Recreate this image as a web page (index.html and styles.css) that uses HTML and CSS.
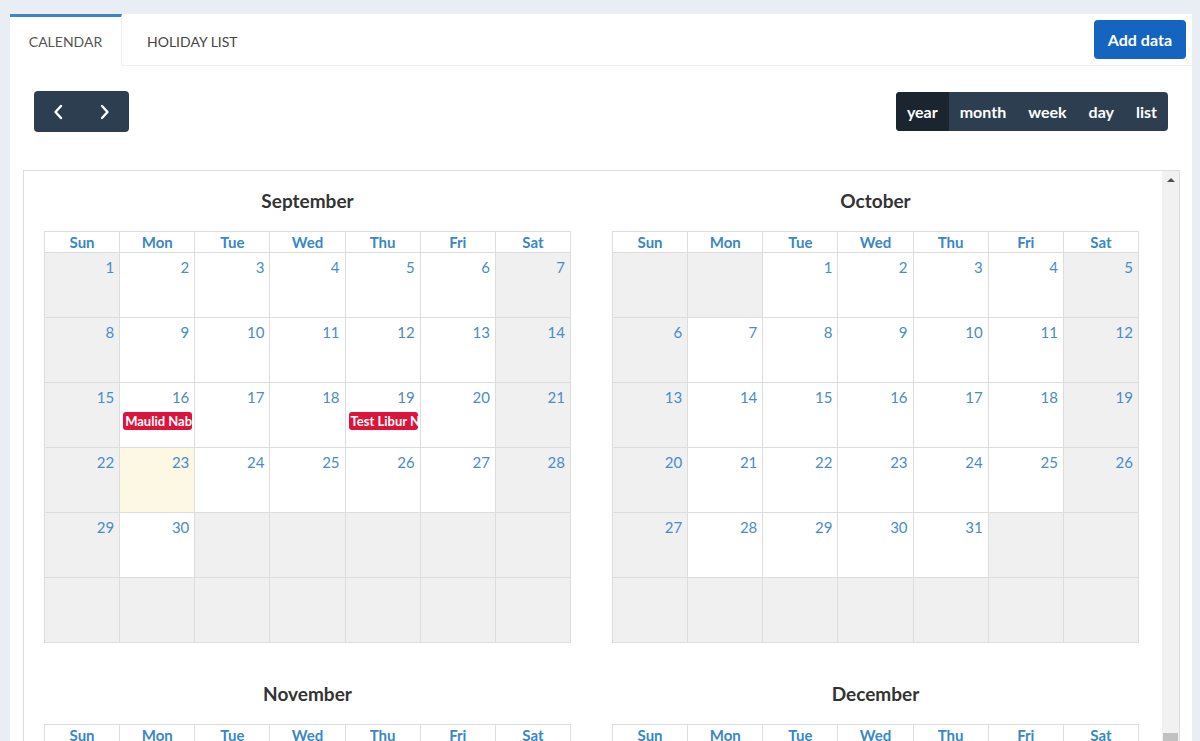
FILE: index.html
```html
<!DOCTYPE html>
<html lang="en">
<head>
  <meta charset="UTF-8">
  <title>Holiday Calendar</title>
  <meta name="viewport" content="width=device-width, initial-scale=1.0">
  <link rel="stylesheet" href="styles.css">
</head>
<body>
  <div class="card">
    <div class="tabbar">
      <div class="tab active">CALENDAR</div>
      <div class="tab">HOLIDAY LIST</div>
      <div class="tab-fill">
        <button class="btn-add">Add data</button>
      </div>
    </div>

    <div class="toolbar">
      <div class="btn-group">
        <button class="btn-nav" aria-label="prev">
          <svg width="10" height="16" viewBox="0 0 10 16"><path d="M8 2 L2.5 8 L8 14" fill="none" stroke="#fff" stroke-width="2.4" stroke-linecap="round" stroke-linejoin="round"/></svg>
        </button>
        <button class="btn-nav" aria-label="next">
          <svg width="10" height="16" viewBox="0 0 10 16"><path d="M2 2 L7.5 8 L2 14" fill="none" stroke="#fff" stroke-width="2.4" stroke-linecap="round" stroke-linejoin="round"/></svg>
        </button>
      </div>
      <div class="btn-group views">
        <button class="btn-view active">year</button>
        <button class="btn-view">month</button>
        <button class="btn-view">week</button>
        <button class="btn-view">day</button>
        <button class="btn-view">list</button>
      </div>
    </div>

    <div class="scroller">
      <div class="months" id="months"></div>
      <div class="scrollbar">
        <div class="arrow-up"></div>
        <div class="thumb"></div>
      </div>
    </div>
  </div>

  <script>
    const monthList = [
      { name: "September", y: 2024, m: 8 },
      { name: "October", y: 2024, m: 9 },
      { name: "November", y: 2024, m: 10 },
      { name: "December", y: 2024, m: 11 }
    ];
    const days = ["Sun", "Mon", "Tue", "Wed", "Thu", "Fri", "Sat"];
    const events = {
      "2024-8-16": "Maulid Nabi Muhammad SAW",
      "2024-8-19": "Test Libur Nasional"
    };
    const today = "2024-8-23";
    const wrap = document.getElementById("months");

    monthList.forEach(mo => {
      const box = document.createElement("div");
      box.className = "month";
      let html = `<div class="month-title">${mo.name}</div><div class="cal">`;
      days.forEach(d => html += `<div class="dow">${d}</div>`);
      const start = new Date(mo.y, mo.m, 1).getDay();
      const count = new Date(mo.y, mo.m + 1, 0).getDate();
      for (let i = 0; i < 42; i++) {
        const day = i - start + 1;
        if (day < 1 || day > count) {
          html += `<div class="day off"></div>`;
          continue;
        }
        const key = `${mo.y}-${mo.m}-${day}`;
        let cls = "day";
        if (i % 7 === 0 || i % 7 === 6) cls += " weekend";
        if (key === today) cls += " today";
        html += `<div class="${cls}"><div class="num">${day}</div>`;
        if (events[key]) html += `<div class="event">${events[key]}</div>`;
        html += `</div>`;
      }
      html += `</div>`;
      box.innerHTML = html;
      wrap.appendChild(box);
    });
  </script>
</body>
</html>
```

FILE: styles.css
```css
html, body {
  height: 741px;
  overflow: hidden;
}

body {
  font-family: Lato, "Liberation Sans", Arial, sans-serif;
  background: #e9eef5;
  margin: 0;
  padding: 14px 8px 0 10px;
  box-sizing: border-box;
}

button {
  font-family: inherit;
  border: none;
  cursor: pointer;
}

.card {
  background: #fff;
  height: 760px;
}

.tabbar {
  display: flex;
  height: 52px;
}

.tab {
  padding: 0 25px;
  font-size: 14px;
  color: #444;
  display: flex;
  align-items: center;
  border-top: 3px solid transparent;
  border-bottom: 1px solid #f0f0f0;
  box-sizing: border-box;
}

.tab.active {
  width: 112px;
  justify-content: center;
  border-top-color: #3c86c4;
  border-right: 1px solid #f0f0f0;
  border-bottom-color: transparent;
  color: #555;
  padding: 0;
}

.tab-fill {
  flex: 1;
  display: flex;
  justify-content: flex-end;
  align-items: flex-start;
  padding: 6px 6px 0 0;
  border-bottom: 1px solid #f0f0f0;
}

.btn-add {
  background: #1565c0;
  color: #fff;
  font-size: 16px;
  font-weight: bold;
  height: 39px;
  padding: 0 14px;
  border-radius: 4px;
}

.toolbar {
  display: flex;
  justify-content: space-between;
  align-items: flex-start;
  padding: 25px 24px 0 24px;
  height: 104px;
  box-sizing: border-box;
}

.btn-group {
  display: flex;
  background: #2c3e50;
  border-radius: 4px;
  overflow: hidden;
}

.btn-nav {
  width: 47.5px;
  height: 41px;
  background: transparent;
  display: flex;
  align-items: center;
  justify-content: center;
}

.views {
  margin-top: 1px;
}

.btn-view {
  height: 39px;
  background: transparent;
  color: #fff;
  font-size: 16px;
  font-weight: bold;
  padding: 0 11px;
}

.btn-view.active {
  background: #1a252f;
}

.scroller {
  margin: 0 12px 0 13px;
  border: 1px solid #ddd;
  display: flex;
  height: 590px;
  overflow: hidden;
}

.months {
  flex: 1;
  display: grid;
  grid-template-columns: 527px 527px;
  column-gap: 41px;
  row-gap: 37px;
  padding: 16px 0 0 20px;
  align-content: start;
}

.month-title {
  text-align: center;
  font-size: 19px;
  font-weight: bold;
  color: #333;
  line-height: 28px;
  margin-bottom: 16px;
}

.cal {
  display: grid;
  grid-template-columns: repeat(7, 1fr);
  border-top: 1px solid #ddd;
  border-left: 1px solid #ddd;
}

.cal > div {
  border-right: 1px solid #ddd;
  border-bottom: 1px solid #ddd;
  box-sizing: border-box;
  min-width: 0;
}

.dow {
  height: 21px;
  line-height: 20px;
  text-align: center;
  font-size: 15px;
  font-weight: bold;
  color: #3a87c5;
}

.day {
  height: 65px;
  background: #fff;
}

.day.off,
.day.weekend {
  background: #f0f0f0;
}

.day.today {
  background: #fcf8e3;
}

.num {
  text-align: right;
  padding: 4px 5px 0 0;
  font-size: 15px;
  line-height: 20px;
  color: #4a8cc6;
}

.event {
  margin: 5px 2px 0 3px;
  height: 18px;
  line-height: 18px;
  padding: 0 2px;
  background: #dc143c;
  color: #fff;
  font-size: 13px;
  font-weight: bold;
  border-radius: 3px;
  white-space: nowrap;
  overflow: hidden;
}

.scrollbar {
  width: 17px;
  background: #f1f1f1;
  display: flex;
  flex-direction: column;
  justify-content: space-between;
  align-items: center;
}

.arrow-up {
  margin-top: 7px;
  width: 0;
  height: 0;
  border-left: 4px solid transparent;
  border-right: 4px solid transparent;
  border-bottom: 4px solid #505050;
}

.thumb {
  width: 15px;
  height: 28px;
  background: #c1c1c1;
}
```
